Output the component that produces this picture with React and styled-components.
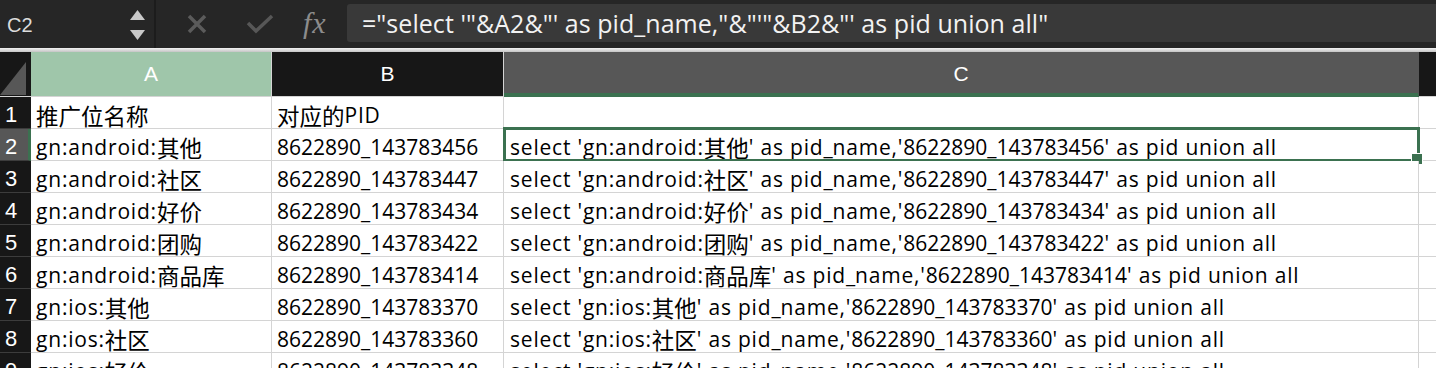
import React from "react";
import styled, { createGlobalStyle } from "styled-components";

const GlobalStyle = createGlobalStyle`
  html, body {
    margin: 0;
    padding: 0;
    background: #ffffff;
    overflow: hidden;
  }
  * {
    box-sizing: border-box;
  }
`;

const Page = styled.div`
  width: 1436px;
  height: 368px;
  overflow: hidden;
  display: flex;
  flex-direction: column;
  background: #ffffff;
  & > * {
    flex-shrink: 0;
  }
`;

const FormulaBar = styled.div`
  height: 48px;
  display: flex;
  align-items: stretch;
  background: #262626;
`;

const NameBox = styled.div`
  width: 156px;
  display: flex;
  align-items: center;
  justify-content: space-between;
  padding: 2px 9px 0 7px;
  border-right: 2px solid #1c1c1c;
  color: #dcdcdc;
  font-family: "Liberation Sans", "Noto Sans", sans-serif;
  font-size: 20px;
`;

const Spinner = styled.div`
  display: flex;
  flex-direction: column;
  gap: 10px;
`;

const Actions = styled.div`
  display: flex;
  align-items: center;
  padding-left: 30px;
`;

const ActionSlot = styled.div`
  width: ${(props) => props.w}px;
  display: flex;
  align-items: center;
`;

const Fx = styled.span`
  font-family: "Liberation Serif", "DejaVu Serif", serif;
  font-style: italic;
  font-size: 30px;
  color: #8c8c8c;
  letter-spacing: 1px;
  margin-top: -3px;
`;

const FormulaInput = styled.div`
  flex: 1;
  margin: 4px 0 6px 5px;
  background: #393939;
  border-radius: 3px 0 0 3px;
  display: flex;
  align-items: center;
  padding-left: 15px;
  color: #f2f2f2;
  font-family: "Open Sans", "Noto Sans", sans-serif;
  font-size: 25px;
  letter-spacing: 0.05px;
  white-space: pre;
`;

const Divider = styled.div`
  height: 4px;
  background: linear-gradient(#f2f2f2, #c4c4c4);
`;

const Sheet = styled.div`
  display: grid;
  grid-template-columns: 31px 241px 232px 915px 1fr;
  grid-template-rows: 45px;
  grid-auto-rows: 32px;
`;

const Corner = styled.div`
  position: relative;
  background: #171717;
  border-bottom: 1px solid #d4d4d4;
  &::after {
    content: "";
    position: absolute;
    right: 5px;
    bottom: 1px;
    width: 0;
    height: 0;
    border-left: 26px solid transparent;
    border-bottom: 33px solid #575757;
  }
`;

const ColHeader = styled.div`
  display: flex;
  align-items: center;
  justify-content: center;
  background: ${(props) =>
    props.state === "col" ? "#575757" : props.state === "row" ? "#9fc6aa" : "#171717"};
  color: #ffffff;
  font-family: "Liberation Sans", "Noto Sans", sans-serif;
  font-size: 21px;
  border-right: 1px solid ${(props) => (props.state === "col" ? "#575757" : "#d4d4d4")};
  border-bottom: ${(props) =>
    props.state === "col" ? "4px solid #3b7150" : "1px solid #d4d4d4"};
  padding-top: ${(props) => (props.state === "col" ? "3px" : "0")};
`;

const Filler = styled.div`
  background: #171717;
  border-bottom: 1px solid #d4d4d4;
`;

const RowHeader = styled.div`
  display: flex;
  align-items: center;
  padding: 4px 0 0 5px;
  background: ${(props) => (props.active ? "#575757" : "#171717")};
  color: #ffffff;
  font-family: "Liberation Sans", "Noto Sans", sans-serif;
  font-size: 22px;
  border-right: ${(props) => (props.active ? "3px solid #3b7150" : "0")};
  border-bottom: 1px solid #3c3c3c;
`;

const Cell = styled.div`
  position: relative;
  display: flex;
  align-items: center;
  padding: 5px 0 0 ${(props) => props.pad || 5}px;
  background: #ffffff;
  color: #000000;
  font-family: "Open Sans", "Noto Sans CJK SC", sans-serif;
  font-size: 21px;
  letter-spacing: 0.8px;
  white-space: pre;
  border-right: 1px solid #d4d4d4;
  border-bottom: 1px solid #d4d4d4;
`;

const Cjk = styled.span`
  font-family: "Noto Sans CJK SC", sans-serif;
  font-size: 22.5px;
  letter-spacing: 0;
`;

const Num = styled.span`
  letter-spacing: 0;
`;

const Blank = styled.div`
  background: #ffffff;
  border-bottom: 1px solid #d4d4d4;
`;

const Selection = styled.div`
  position: absolute;
  left: -1px;
  top: -2px;
  right: -2px;
  bottom: -2px;
  border: 3px solid #3b7150;
  pointer-events: none;
  &::after {
    content: "";
    position: absolute;
    right: -6px;
    bottom: -6px;
    width: 10px;
    height: 10px;
    background: #3b7150;
    border: 1px solid #ffffff;
  }
`;

const rows = [
  ["推广位名称", "对应的PID"],
  ["gn:android:其他", "8622890_143783456"],
  ["gn:android:社区", "8622890_143783447"],
  ["gn:android:好价", "8622890_143783434"],
  ["gn:android:团购", "8622890_143783422"],
  ["gn:android:商品库", "8622890_143783414"],
  ["gn:ios:其他", "8622890_143783370"],
  ["gn:ios:社区", "8622890_143783360"],
  ["gn:ios:好价", "8622890_143783348"],
];

// cell text: CJK runs and digit runs get their own spans
const Mixed = ({ text }) =>
  text.split(/([\u4e00-\u9fff]+|[0-9_]+)/).map((part, i) => {
    if (/[\u4e00-\u9fff]/.test(part)) return <Cjk key={i}>{part}</Cjk>;
    if (/^[0-9_]+$/.test(part)) return <Num key={i}>{part}</Num>;
    return part;
  });

const sql = (name, pid) =>
  `select '${name}' as pid_name,'${pid}' as pid union all`;

export default function App() {
  return (
    <>
      <GlobalStyle />
      <Page>
        <FormulaBar>
          <NameBox>
            <span>C2</span>
            <Spinner>
              <svg width="15" height="10" viewBox="0 0 15 10">
                <polygon points="7.5,0 15,10 0,10" fill="#c9c9c9" />
              </svg>
              <svg width="15" height="10" viewBox="0 0 15 10">
                <polygon points="0,0 15,0 7.5,10" fill="#c9c9c9" />
              </svg>
            </Spinner>
          </NameBox>
          <Actions>
            <ActionSlot w={60}>
              <svg width="22" height="22" viewBox="0 0 22 22">
                <path d="M3 3 L19 19 M19 3 L3 19" stroke="#5b5b5b" strokeWidth="3.5" />
              </svg>
            </ActionSlot>
            <ActionSlot w={57}>
              <svg width="28" height="22" viewBox="0 0 28 22">
                <path d="M2 10 L10 18 L26 3" stroke="#575757" strokeWidth="3.5" fill="none" />
              </svg>
            </ActionSlot>
            <ActionSlot w={39}>
              <Fx>fx</Fx>
            </ActionSlot>
          </Actions>
          <FormulaInput>{`="select '"&A2&"' as pid_name,"&"'"&B2&"' as pid union all"`}</FormulaInput>
        </FormulaBar>
        <Divider />
        <Sheet>
          <Corner />
          <ColHeader state="row">A</ColHeader>
          <ColHeader>B</ColHeader>
          <ColHeader state="col">C</ColHeader>
          <Filler />
          {rows.map((r, i) => (
            <React.Fragment key={i}>
              <RowHeader active={i === 1}>{i + 1}</RowHeader>
              <Cell>
                <Mixed text={r[0]} />
              </Cell>
              <Cell>
                <Mixed text={r[1]} />
              </Cell>
              <Cell pad={6}>
                {i > 0 && <Mixed text={sql(r[0], r[1])} />}
                {i === 1 && <Selection />}
              </Cell>
              <Blank />
            </React.Fragment>
          ))}
        </Sheet>
      </Page>
    </>
  );
}
